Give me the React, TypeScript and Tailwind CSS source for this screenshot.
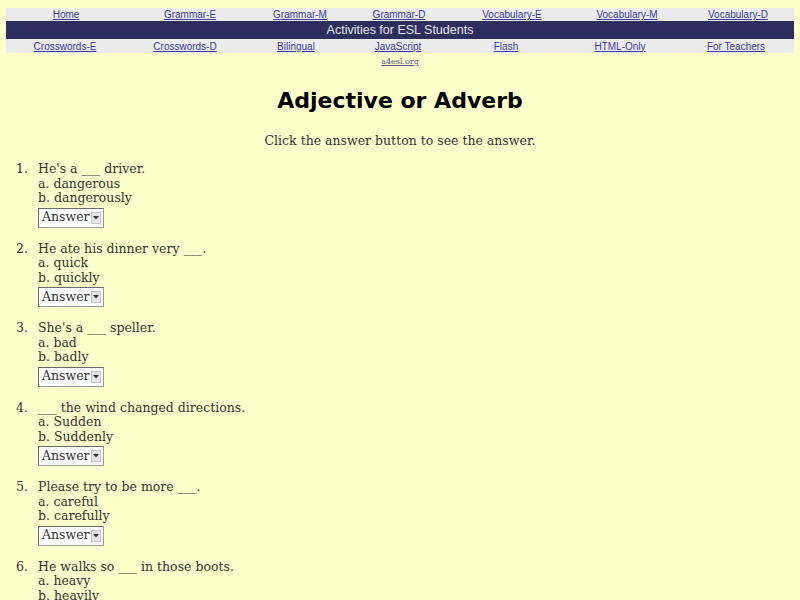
const topLinks = ["Home", "Grammar-E", "Grammar-M", "Grammar-D", "Vocabulary-E", "Vocabulary-M", "Vocabulary-D"];
const bottomLinks = ["Crosswords-E", "Crosswords-D", "Bilingual", "JavaScript", "Flash", "HTML-Only", "For Teachers"];

const questions = [
  { q: "He's a ___ driver.", a: "dangerous", b: "dangerously" },
  { q: "He ate his dinner very ___.", a: "quick", b: "quickly" },
  { q: "She's a ___ speller.", a: "bad", b: "badly" },
  { q: "___ the wind changed directions.", a: "Sudden", b: "Suddenly" },
  { q: "Please try to be more ___.", a: "careful", b: "carefully" },
  { q: "He walks so ___ in those boots.", a: "heavy", b: "heavily" },
];

function NavLink({ label }: { label: string }) {
  return (
    <a href="#" className="text-center text-[10px] leading-[13px] text-[#3b3b9e] underline">
      {label}
    </a>
  );
}

function AnswerBox() {
  return (
    <div className="inline-flex items-center h-[20px] w-[66px] border border-[#9a9a9a] border-t-[#6a6a6a] border-l-[#6a6a6a] bg-white pl-[3px] pr-[2px] mt-[2px]">
      <span className="text-[12.5px] text-[#333]">Answer</span>
      <span className="ml-auto flex items-center justify-center w-[10px] h-[12px] bg-[#e6e6e6] border border-[#c4c4c4]">
        <svg width="6" height="4" viewBox="0 0 6 4">
          <path d="M0 0 L6 0 L3 3.5 Z" fill="#333" />
        </svg>
      </span>
    </div>
  );
}

export default function App() {
  return (
    <div className="min-h-[600px] w-[800px] bg-[#ffffcc] pt-[8px] px-[6px] font-['DejaVu_Serif',serif] text-[#333]">
      <div className="font-['Liberation_Sans',Arial,sans-serif]">
        <div className="grid grid-cols-[120px_128px_92px_106px_120px_110px_112px] bg-[#ececec] h-[13px] items-center">
          {topLinks.map((l) => (
            <NavLink key={l} label={l} />
          ))}
        </div>
        <div className="bg-[#2e2e5e] h-[18px] flex items-center justify-center text-[12.5px] text-[#e4e4ee]">
          Activities for ESL Students
        </div>
        <div className="grid grid-cols-[118px_122px_100px_104px_112px_116px_116px] bg-[#ececec] h-[14px] items-center">
          {bottomLinks.map((l) => (
            <NavLink key={l} label={l} />
          ))}
        </div>
      </div>
      <div className="text-center leading-[10px] mt-[1px]">
        <a href="#" className="text-[8px] text-[#55558a] underline">a4esl.org</a>
      </div>

      <h1 className="text-center mt-[19px] font-['DejaVu_Sans',sans-serif] font-bold text-[22px] text-black leading-[30px]">
        Adjective or Adverb
      </h1>
      <p className="text-center text-[12.5px] mt-[17px] leading-[16px]">Click the answer button to see the answer.</p>

      <ol className="mt-[13px] text-[12.5px] leading-[14.5px]">
        {questions.map((it, i) => (
          <li key={i} className="flex mb-[14px]">
            <span className="w-[30px] pr-[8px] text-right shrink-0">{i + 1}.</span>
            <div className="ml-[2px]">
              <div>{it.q}</div>
              <div>a. {it.a}</div>
              <div>b. {it.b}</div>
              <AnswerBox />
            </div>
          </li>
        ))}
      </ol>
    </div>
  );
}
